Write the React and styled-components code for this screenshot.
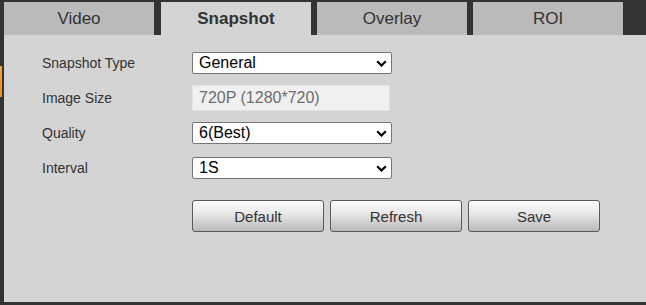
import React, { useState } from 'react';
import styled, { createGlobalStyle } from 'styled-components';

const GlobalStyle = createGlobalStyle`
  html, body {
    margin: 0;
    padding: 0;
    background-color: #333333;
    font-family: "Liberation Sans", Arial, sans-serif;
  }
`;

const Page = styled.div`
  display: flex;
  width: 646px;
  height: 305px;
  background-color: #333333;
  overflow: hidden;
`;

const LeftRail = styled.div`
  width: 4px;
  flex-shrink: 0;
  display: flex;
  flex-direction: column;
`;

const RailMarker = styled.div`
  margin-top: 66px;
  width: 2px;
  height: 31px;
  background: linear-gradient(to bottom, #f7a63a, #f08a1c);
`;

const Main = styled.div`
  flex: 1;
  display: flex;
  flex-direction: column;
`;

const TabBar = styled.div`
  display: flex;
  gap: 6px;
  padding-top: 2px;
  height: 33px;
`;

const Tab = styled.div`
  width: 150px;
  margin-right: ${p => (p.$wide ? '1px' : '0')};
  display: flex;
  align-items: center;
  justify-content: center;
  font-size: 17px;
  font-weight: ${p => (p.$active ? 'bold' : 'normal')};
  color: #333333;
  background-color: ${p => (p.$active ? '#d4d4d4' : '#bababa')};
  cursor: pointer;
`;

const Panel = styled.div`
  height: 267px;
  background-color: #d4d4d4;
  padding: 10px 0 0 38px;
  box-sizing: border-box;
`;

const Form = styled.div`
  display: grid;
  grid-template-columns: 150px 200px;
  grid-auto-rows: 35px;
  align-items: center;
`;

const Label = styled.div`
  font-size: 14px;
  color: #333333;
`;

const SelectWrap = styled.div`
  position: relative;
  width: 200px;
  height: 22px;
`;

const Select = styled.select`
  appearance: none;
  -webkit-appearance: none;
  width: 200px;
  height: 22px;
  box-sizing: border-box;
  border: 1px solid #767676;
  border-radius: 2px;
  background-color: #ffffff;
  color: #000000;
  font-family: "Liberation Sans", Arial, sans-serif;
  font-size: 16px;
  padding: 0 24px 0 6px;
  outline: none;
  cursor: pointer;
`;

const Chevron = styled.svg`
  position: absolute;
  right: 5px;
  top: 8px;
  width: 11px;
  height: 7px;
  pointer-events: none;
`;

const ReadOnlyField = styled.input`
  width: 198px;
  height: 26px;
  box-sizing: border-box;
  border: 1px solid #e3e3e3;
  background-color: #f0f0f0;
  color: #6d6d6d;
  font-family: "Liberation Sans", Arial, sans-serif;
  font-size: 16px;
  padding: 0 6px;
  outline: none;
`;

const ButtonRow = styled.div`
  display: flex;
  gap: 6px;
  margin: 15px 0 0 150px;
`;

const Button = styled.button`
  width: 132px;
  height: 32px;
  box-sizing: border-box;
  border: 1px solid #5a5a5a;
  border-radius: 3px;
  background: linear-gradient(to bottom, #fdfdfd 0%, #e6e6e6 45%, #b9b9b9 100%);
  color: #333333;
  font-family: "Liberation Sans", Arial, sans-serif;
  font-size: 15px;
  cursor: pointer;
  padding: 0;
`;

const tabs = ['Video', 'Snapshot', 'Overlay', 'ROI'];

const Dropdown = ({ value, onChange, options }) => (
  <SelectWrap>
    <Select value={value} onChange={e => onChange(e.target.value)}>
      {options.map(o => (
        <option key={o}>{o}</option>
      ))}
    </Select>
    <Chevron viewBox="0 0 11 7">
      <path d="M1.2 1.2 L5.5 5.5 L9.8 1.2" fill="none" stroke="#000" strokeWidth="2.2" />
    </Chevron>
  </SelectWrap>
);

export default function App() {
  const [active, setActive] = useState('Snapshot');
  const [type, setType] = useState('General');
  const [quality, setQuality] = useState('6(Best)');
  const [interval, setInterval] = useState('1S');

  return (
    <>
      <GlobalStyle />
      <Page>
        <LeftRail>
          <RailMarker />
        </LeftRail>
        <Main>
          <TabBar>
            {tabs.map((t, i) => (
              <Tab key={t} $active={active === t} $wide={i === 0} onClick={() => setActive(t)}>
                {t}
              </Tab>
            ))}
          </TabBar>
          <Panel>
            <Form>
              <Label>Snapshot Type</Label>
              <Dropdown value={type} onChange={setType} options={['General', 'Event']} />

              <Label>Image Size</Label>
              <ReadOnlyField value="720P (1280*720)" disabled readOnly />

              <Label>Quality</Label>
              <Dropdown
                value={quality}
                onChange={setQuality}
                options={['1(Worst)', '2', '3', '4', '5', '6(Best)']}
              />

              <Label>Interval</Label>
              <Dropdown value={interval} onChange={setInterval} options={['1S', '2S', '3S', '4S', '5S']} />
            </Form>
            <ButtonRow>
              <Button>Default</Button>
              <Button>Refresh</Button>
              <Button>Save</Button>
            </ButtonRow>
          </Panel>
        </Main>
      </Page>
    </>
  );
}
